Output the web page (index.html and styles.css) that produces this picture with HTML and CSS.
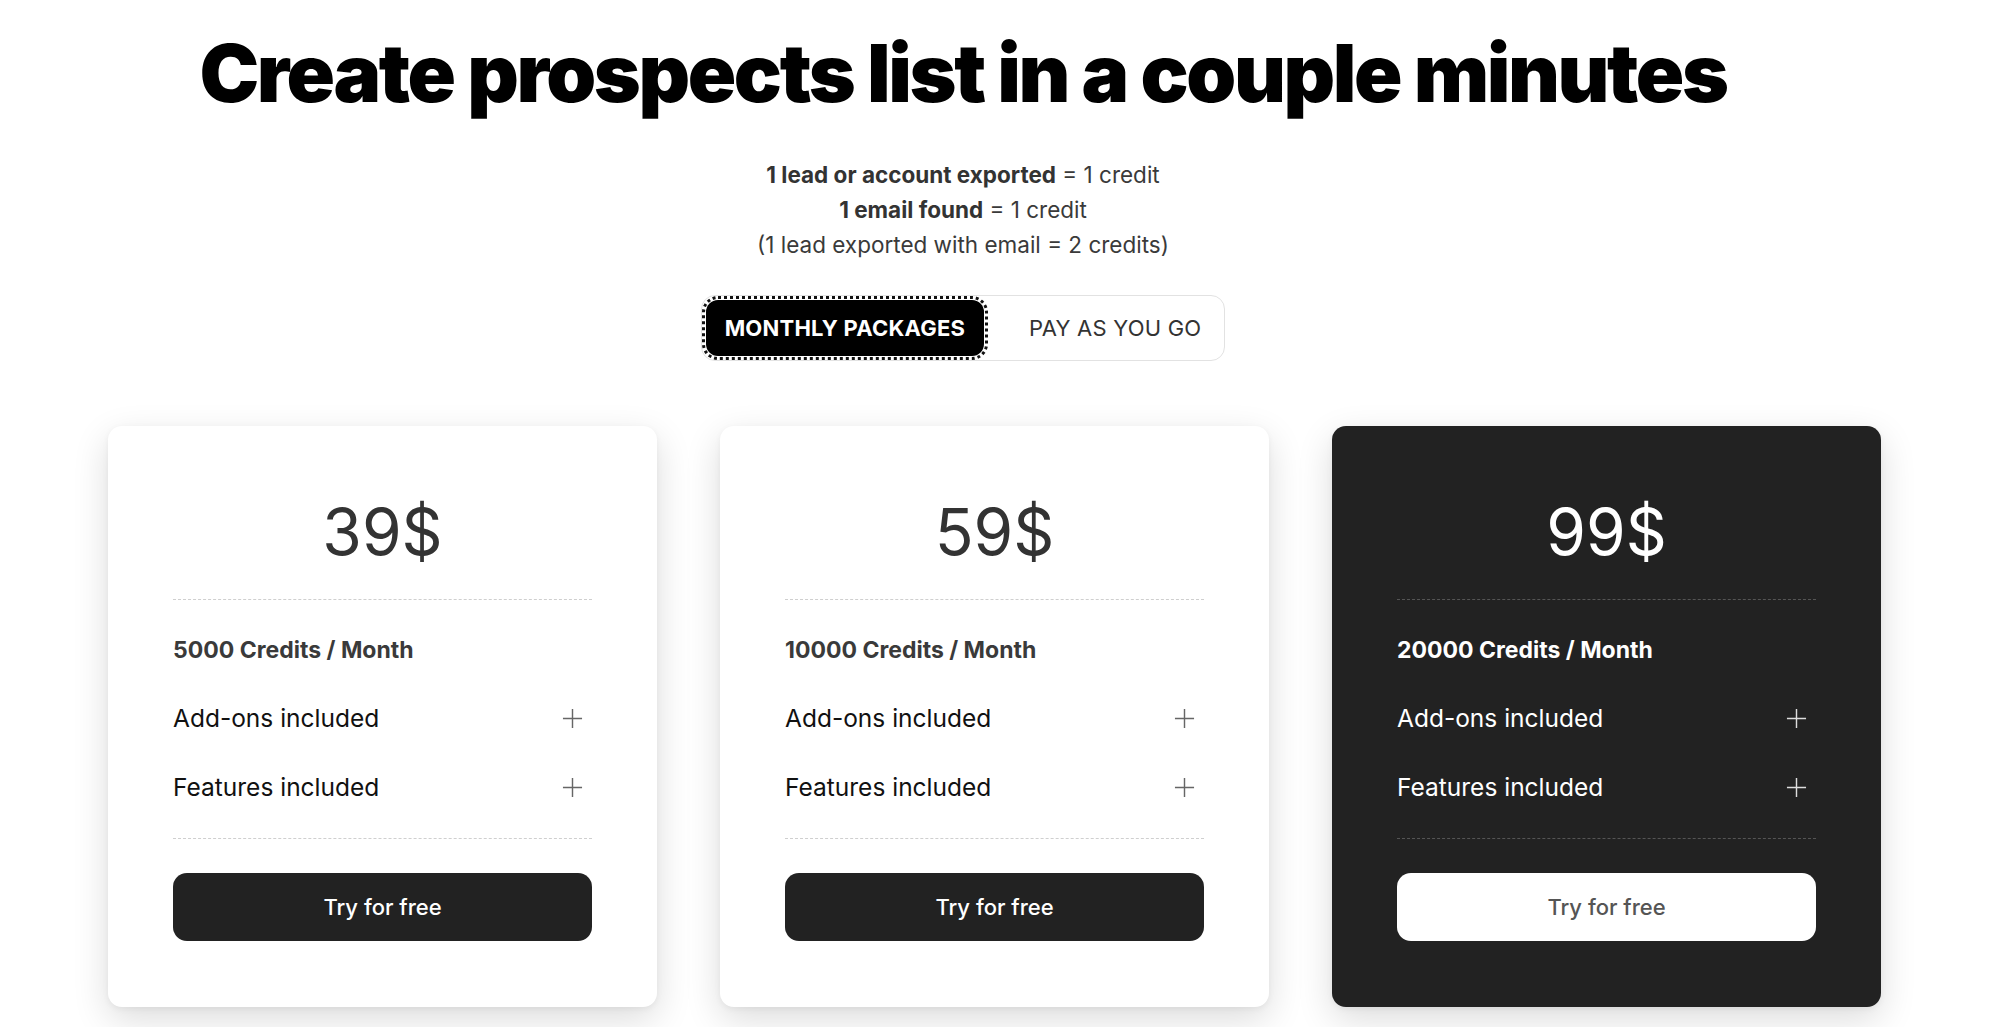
FILE: index.html
```html
<!DOCTYPE html>
<html lang="en">
<head>
<meta charset="utf-8">
<title>Pricing</title>
<link rel="stylesheet" href="styles.css">
</head>
<body>
<section class="intro">
  <h1 class="title">Create prospects list in a couple minutes</h1>
  <div class="rules">
    <p><strong>1 lead or account exported</strong> = 1 credit</p>
    <p><strong>1 email found</strong> = 1 credit</p>
    <p>(1 lead exported with email = 2 credits)</p>
  </div>
  <div class="toggle">
    <button class="toggle-btn active">MONTHLY PACKAGES</button>
    <button class="toggle-btn">PAY AS YOU GO</button>
  </div>
</section>
<section class="plans">
  <div class="card">
    <div class="price">39$</div>
    <div class="body">
      <div class="credits">5000 Credits / Month</div>
      <div class="row"><span>Add-ons included</span><svg class="plus" viewBox="0 0 22 22"><path d="M11 1v20M1 11h20"/></svg></div>
      <div class="row"><span>Features included</span><svg class="plus" viewBox="0 0 22 22"><path d="M11 1v20M1 11h20"/></svg></div>
    </div>
    <button class="cta">Try for free</button>
  </div>
  <div class="card">
    <div class="price">59$</div>
    <div class="body">
      <div class="credits">10000 Credits / Month</div>
      <div class="row"><span>Add-ons included</span><svg class="plus" viewBox="0 0 22 22"><path d="M11 1v20M1 11h20"/></svg></div>
      <div class="row"><span>Features included</span><svg class="plus" viewBox="0 0 22 22"><path d="M11 1v20M1 11h20"/></svg></div>
    </div>
    <button class="cta">Try for free</button>
  </div>
  <div class="card dark">
    <div class="price">99$</div>
    <div class="body">
      <div class="credits">20000 Credits / Month</div>
      <div class="row"><span>Add-ons included</span><svg class="plus" viewBox="0 0 22 22"><path d="M11 1v20M1 11h20"/></svg></div>
      <div class="row"><span>Features included</span><svg class="plus" viewBox="0 0 22 22"><path d="M11 1v20M1 11h20"/></svg></div>
    </div>
    <button class="cta">Try for free</button>
  </div>
</section>
</body>
</html>
```
FILE: styles.css
```css
* { box-sizing: border-box; }
html, body { margin: 0; padding: 0; background: #fff; }
body {
  font-family: Inter, "Noto Sans", "Liberation Sans", sans-serif;
  color: #222;
  width: 1999px;
  height: 1027px;
  overflow: hidden;
}
.intro {
  display: flex;
  flex-direction: column;
  align-items: center;
  padding-right: 73px;
}
.title {
  margin: 23px 0 0;
  font-size: 80px;
  line-height: 100px;
  font-weight: 900;
  letter-spacing: -0.03em;
  color: #000;
}
.rules {
  margin-top: 34px;
  text-align: center;
  font-size: 22.5px;
  line-height: 35px;
  color: #3a3a3a;
}
.rules p { margin: 0; }
.rules strong { font-weight: 700; color: #333; }
.toggle {
  margin-top: 33px;
  display: flex;
  align-items: center;
  height: 66px;
  padding: 4px;
  border: 1px solid #e2e2e2;
  border-radius: 14px;
  background: #fff;
}
.toggle-btn {
  font-family: inherit;
  font-size: 22px;
  border: 0;
  background: transparent;
  height: 56px;
  padding: 0 19px;
  border-radius: 12px;
  color: #333;
  letter-spacing: 0.01em;
}
.toggle-btn + .toggle-btn { padding: 0 19px 0 45px; }
.toggle-btn.active {
  background: #000;
  color: #fff;
  font-weight: 700;
  outline: 3px dotted #111;
  outline-offset: 1px;
}
.plans {
  margin-top: 65px;
  display: grid;
  grid-template-columns: repeat(3, 549px);
  column-gap: 63px;
  padding-left: 108px;
}
.card {
  background: #fff;
  border-radius: 14px;
  box-shadow: 0 12px 36px rgba(0,0,0,0.14), 0 2px 6px rgba(0,0,0,0.05);
  padding: 66px 65px 66px;
  display: flex;
  flex-direction: column;
}
.price {
  text-align: center;
  font-size: 64px;
  line-height: 80px;
  font-weight: 400;
  color: #333;
  padding-bottom: 27px;
  border-bottom: 1px dashed #cfcfcf;
}
.body {
  padding: 35px 0 35px;
  border-bottom: 1px dashed #cfcfcf;
  display: flex;
  flex-direction: column;
  gap: 37px;
}
.credits {
  font-size: 23px;
  line-height: 30px;
  font-weight: 700;
  color: #3a3a3a;
}
.row {
  display: flex;
  align-items: center;
  justify-content: space-between;
  font-size: 24.5px;
  line-height: 32px;
  color: #111;
}
.plus {
  width: 21px;
  height: 21px;
  margin-right: 9px;
  fill: none;
  stroke: #666;
  stroke-width: 1.5;
}
.cta {
  margin-top: 34px;
  height: 68px;
  border: 0;
  border-radius: 14px;
  background: #222;
  color: #fff;
  font-family: inherit;
  font-size: 22px;
  font-weight: 500;
}
.card.dark { background: #222; }
.dark .price { color: #fff; border-bottom-color: #555; }
.dark .body { border-bottom-color: #555; }
.dark .credits { color: #fff; }
.dark .row { color: #fff; }
.dark .plus { stroke: #ddd; }
.dark .cta { background: #fff; color: #555; }
```
